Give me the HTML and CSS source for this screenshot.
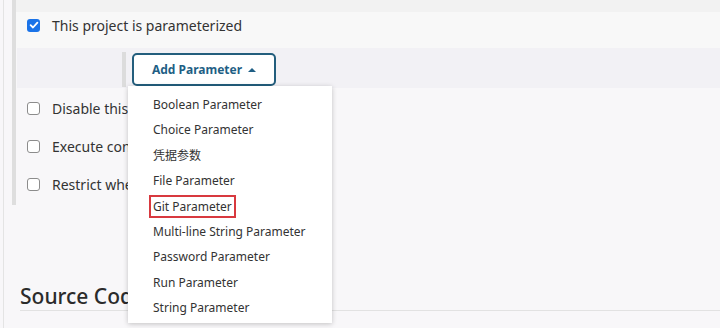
FILE: index.html
```html
<!DOCTYPE html>
<html lang="en">
<head>
    <meta charset="UTF-8">
    <title>Configure - Parameters</title>
    <link rel="stylesheet" href="styles.css">
</head>
<body>
    <div class="page">
        <div class="section">
            <div class="prev"></div>
            <div class="row row-top">
                <span class="check checked">
                    <svg width="12" height="12" viewBox="0 0 12 12"><path d="M2.6 6.2 L5 8.5 L9.4 3.6" fill="none" stroke="#fff" stroke-width="1.8" stroke-linecap="round" stroke-linejoin="round"/></svg>
                </span>
                <span class="label">This project is parameterized</span>
            </div>
            <div class="params">
                <div class="nest-bar"></div>
                <div class="add-wrap">
                    <button class="add-button">Add Parameter <span class="caret"></span></button>
                    <ul class="menu">
                        <li>Boolean Parameter</li>
                        <li>Choice Parameter</li>
                        <li class="cjk">凭据参数</li>
                        <li>File Parameter</li>
                        <li><span class="marked">Git Parameter</span></li>
                        <li>Multi-line String Parameter</li>
                        <li>Password Parameter</li>
                        <li>Run Parameter</li>
                        <li>String Parameter</li>
                    </ul>
                </div>
            </div>
            <div class="row">
                <span class="check"></span>
                <span class="label">Disable this project</span>
            </div>
            <div class="row">
                <span class="check"></span>
                <span class="label">Execute concurrent builds if necessary</span>
            </div>
            <div class="row">
                <span class="check"></span>
                <span class="label">Restrict where this project can be run</span>
            </div>
        </div>
        <div class="heading-row">
            <h2 class="heading">Source Code Management</h2>
        </div>
    </div>
</body>
</html>
```

FILE: styles.css
```css
body {
    margin: 0;
    background-color: #f8f7f9;
    color: #333;
    font-family: "Noto Sans", "Noto Sans CJK SC", sans-serif;
}
.page {
    margin-left: 3px;
    border-left: 1px solid #e4e4e4;
    padding-left: 8px;
    height: 328px;
    overflow: hidden;
}
.section {
    border-left: 4px solid #dedede;
    padding-bottom: 3px;
}
.prev {
    height: 12px;
    background-color: #f2f2f2;
}
.row {
    display: flex;
    align-items: center;
    height: 38px;
    padding: 2px 0 0 11px;
    box-sizing: border-box;
    gap: 12px;
}
.row-top {
    height: 36px;
    padding: 0 0 10px 11px;
    background-color: #f8f8f8;
}
.label {
    font-size: 14px;
    white-space: nowrap;
}
.check {
    box-sizing: border-box;
    width: 13px;
    height: 13px;
    border: 1.5px solid #8c8c8c;
    border-radius: 3px;
    background-color: #fff;
    display: flex;
    align-items: center;
    justify-content: center;
}
.check.checked {
    border: none;
    background-color: #1a73e8;
}
.params {
    display: flex;
    height: 40px;
    margin-left: 1px;
    padding: 4px 0 0 105px;
    box-sizing: border-box;
    background-color: #f2f1f5;
    gap: 6px;
    position: relative;
    z-index: 2;
}
.nest-bar {
    width: 4px;
    height: 35px;
    background-color: #dcdcdc;
}
.add-wrap {
    position: relative;
}
.add-button {
    box-sizing: border-box;
    width: 144px;
    height: 33px;
    margin-top: 1px;
    border: 2px solid #235e7d;
    border-radius: 5px;
    background-color: #fff;
    color: #1f5f85;
    font-family: "Noto Sans", sans-serif;
    font-size: 12px;
    font-weight: bold;
    padding: 0;
    display: flex;
    align-items: center;
    justify-content: center;
    gap: 6px;
}
.caret {
    width: 0;
    height: 0;
    border-left: 4px solid transparent;
    border-right: 4px solid transparent;
    border-bottom: 4px solid #1f5f85;
}
.menu {
    position: absolute;
    top: 34px;
    left: -4px;
    width: 204px;
    margin: 0;
    padding: 6px 0 2px;
    list-style: none;
    background-color: #fff;
    box-shadow: 0 1px 5px rgba(0, 0, 0, 0.22);
}
.menu li {
    height: 25.4px;
    line-height: 25.4px;
    padding-left: 25px;
    font-size: 12px;
    white-space: nowrap;
}
.marked {
    display: inline-block;
    line-height: 19px;
    margin-left: -4px;
    padding: 0 2px;
    border: 2px solid #d8393f;
}
.heading-row {
    margin: 77px 0 0 8px;
    border-bottom: 1px solid #e2e2e2;
}
.heading {
    margin: 0;
    font-size: 21px;
    font-weight: 500;
    line-height: 28px;
    color: #2b2b2b;
    white-space: nowrap;
}
```
